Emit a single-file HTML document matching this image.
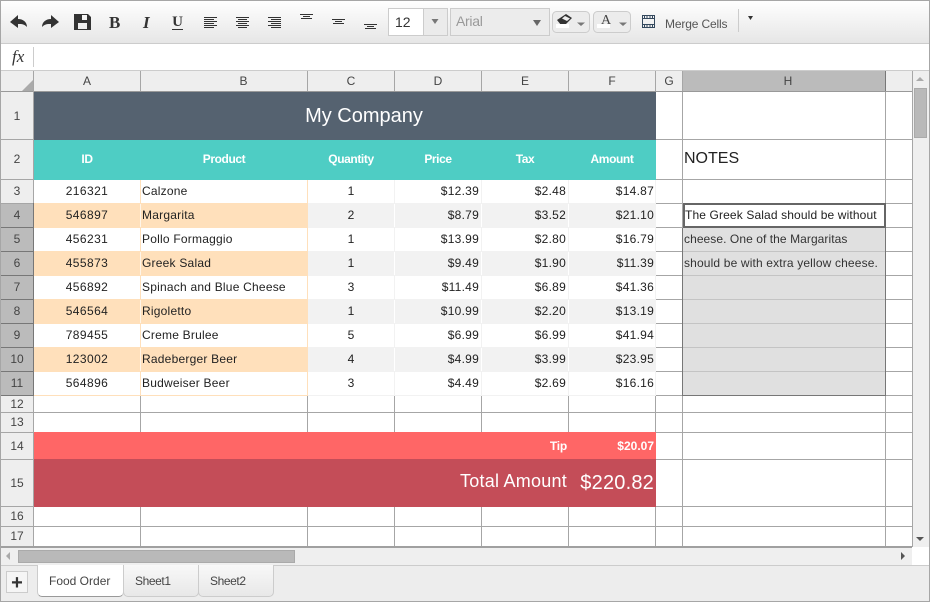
<!DOCTYPE html>
<html><head><meta charset="utf-8"><style>
html,body{margin:0;padding:0;background:#fff}
#p{position:relative;width:930px;height:602px;overflow:hidden;background:#fff;font-family:"Liberation Sans",Arial,sans-serif;font-size:12px;color:#222}
#p div{position:absolute;white-space:nowrap}
.h{background:#a6a6a6;height:1px}
.v{background:#a6a6a6;width:1px}
.c{text-align:center}
.r{text-align:right}
.rh{left:1px;width:32px;text-align:center;color:#444;background:#eee;font-size:12px}
.ch{top:71px;height:20px;line-height:20px;text-align:center;color:#444;font-size:12px}
.a{left:34px;width:106px;text-align:center;height:24px;line-height:22px;letter-spacing:.42px}
.b{left:142px;height:24px;line-height:22px;letter-spacing:.22px}
.q{left:308px;width:86px;text-align:center;height:24px;line-height:22px}
.d{left:395px;width:84px;text-align:right;height:24px;line-height:22px;letter-spacing:.25px}
.e{left:482px;width:84px;text-align:right;height:24px;line-height:22px;letter-spacing:.25px}
.f{left:569px;width:85px;text-align:right;height:24px;line-height:22px;letter-spacing:.25px}
.th{top:140px;height:39px;line-height:39px;text-align:center;color:#fff;font-weight:bold;letter-spacing:-.4px}
</style></head><body><div id="p">

<!-- toolbar -->
<div style="left:0;top:0;width:930px;height:43px;background:linear-gradient(#fff,#e6e6e6)"></div>
<div style="left:0;top:43px;width:930px;height:1px;background:#ccc"></div>
<div style="left:0;top:70px;width:930px;height:1px;background:#ccc"></div>
<div style="left:33px;top:47px;width:1px;height:20px;background:#ccc"></div>
<div style="left:12px;top:47px;font:italic 17px 'Liberation Serif',serif;color:#333">fx</div>

<svg style="position:absolute;left:0;top:0" width="930" height="44" viewBox="0 0 930 44">
<g fill="#333">
<path d="M10 22 L18 15 V19 C23 19 27 22 27 27 C24 24 22 24 18 24 V28 Z"/>
<path d="M59 22 L51 15 V19 C46 19 42 22 42 27 C45 24 47 24 51 24 V28 Z"/>
<path fill-rule="evenodd" d="M74 14 H88 L91 17 V30 H74 Z M82 15 V20 H87 V15 Z M78 23 V29 H87 V23 Z"/>
</g>
<g fill="#333">
<rect x="204" y="17" width="13" height="1"/><rect x="204" y="19" width="10" height="1"/><rect x="204" y="21" width="13" height="1"/><rect x="204" y="23" width="10" height="1"/><rect x="204" y="25" width="13" height="1"/><rect x="204" y="27" width="10" height="1"/>
<rect x="236" y="17" width="13" height="1"/><rect x="238" y="19" width="9" height="1"/><rect x="236" y="21" width="13" height="1"/><rect x="238" y="23" width="9" height="1"/><rect x="236" y="25" width="13" height="1"/><rect x="238" y="27" width="9" height="1"/>
<rect x="268" y="17" width="13" height="1"/><rect x="271" y="19" width="10" height="1"/><rect x="268" y="21" width="13" height="1"/><rect x="271" y="23" width="10" height="1"/><rect x="268" y="25" width="13" height="1"/><rect x="271" y="27" width="10" height="1"/>
<rect x="300" y="14" width="13" height="1"/><rect x="303" y="16" width="7" height="1"/><rect x="301" y="18" width="11" height="1"/>
<rect x="332" y="19" width="13" height="1"/><rect x="335" y="21" width="7" height="1"/><rect x="333" y="23" width="11" height="1"/>
<rect x="364" y="24" width="13" height="1"/><rect x="367" y="26" width="7" height="1"/><rect x="365" y="28" width="11" height="1"/>
</g>
<!-- size box -->
<rect x="388.500" y="8.500" width="59" height="27" fill="#ebebeb" stroke="#ccc"/>
<rect x="389" y="9" width="34" height="26" fill="#fff"/>
<rect x="423" y="9" width="1" height="26" fill="#ccc"/>
<path d="M431.500 19 H438.500 L435 24 Z" fill="#777"/>
<!-- font box -->
<rect x="450.500" y="8.500" width="99" height="27" fill="#ececec" stroke="#ccc"/>
<path d="M533 20 H541 L537 26 Z" fill="#666"/>
<!-- colour buttons -->
<rect x="552.500" y="11.500" width="37" height="21" rx="4" fill="#ececec" stroke="#ccc"/>
<path d="M557 20 L566 14 L572 18 L565 25 H561 Z" fill="#333"/>
<path d="M565 16 L570 18.500 L567 21 L562 18.500 Z" fill="#eee"/>
<rect x="556" y="24" width="13" height="4" fill="#fff"/>
<path d="M577 22.500 H585 L581 26 Z" fill="#777"/>
<rect x="593.500" y="11.500" width="37" height="21" rx="4" fill="#ececec" stroke="#ccc"/>
<rect x="597" y="24" width="13" height="4" fill="#fff"/>
<path d="M619 22.500 H627 L623 26 Z" fill="#777"/>
<!-- merge icon -->
<g fill="none" stroke="#34495e"><rect x="642.500" y="15.500" width="12" height="12"/><path d="M642 18.500 H655 M642 24.500 H655"/></g>
<path d="M644.500 16V18M647 16V18M650 16V18M652.500 16V18M644.500 25V27M647 25V27M650 25V27M652.500 25V27" stroke="#34495e" fill="none"/>
<rect x="738" y="9" width="1" height="23" fill="#ccc"/>
<path d="M748 16 H753 L750.500 20 Z" fill="#333"/>
</svg>
<div style="left:109px;top:13px;font:bold 17px 'Liberation Serif',serif;color:#333">B</div>
<div style="left:143px;top:13px;font:italic bold 17px 'Liberation Serif',serif;color:#333">I</div>
<div style="left:172px;top:15px;font:bold 15px 'Liberation Serif',serif;color:#333;border-bottom:1px solid #333;line-height:14px;width:11px;text-align:center">U</div>
<div style="left:395px;top:14px;font-size:14px;color:#333">12</div>
<div style="left:456px;top:13px;font-size:14px;color:#999;letter-spacing:-.3px">Arial</div>
<div style="left:601px;top:13px;font:14px 'Liberation Serif',serif;color:#444">A</div>
<div style="left:665px;top:17px;font-size:12px;color:#555;letter-spacing:-.15px">Merge Cells</div>

<!-- column headers -->
<div style="left:1px;top:71px;width:911px;height:20px;background:#eee"></div>
<div style="left:683px;top:71px;width:202px;height:20px;background:#bbb"></div>
<div style="left:22px;top:80px;width:0;height:0;border-style:solid;border-width:0 0 11px 11px;border-color:transparent transparent #aaa transparent"></div>
<div class="ch" style="left:34px;width:106px">A</div>
<div class="ch" style="left:180px;width:127px">B</div>
<div class="ch" style="left:308px;width:86px">C</div>
<div class="ch" style="left:395px;width:86px">D</div>
<div class="ch" style="left:482px;width:86px">E</div>
<div class="ch" style="left:569px;width:86px">F</div>
<div class="ch" style="left:656px;width:26px">G</div>
<div class="ch" style="left:691px;width:194px">H</div>
<div class="h" style="left:1px;top:91px;width:911px;background:#999"></div>
<div class="v" style="left:33px;top:71px;height:476px"></div>
<div class="v" style="left:140px;top:71px;height:20px"></div>
<div class="v" style="left:307px;top:71px;height:20px"></div>
<div class="v" style="left:394px;top:71px;height:20px"></div>
<div class="v" style="left:481px;top:71px;height:20px"></div>
<div class="v" style="left:568px;top:71px;height:20px"></div>
<div class="v" style="left:655px;top:71px;height:20px"></div>
<div class="v" style="left:682px;top:71px;height:20px"></div>
<div class="v" style="left:885px;top:71px;height:20px;background:#777"></div>

<!-- row headers -->
<div class="rh" style="top:92px;height:47px;line-height:48px">1</div>
<div class="rh" style="top:140px;height:39px;line-height:39px">2</div>
<div class="rh" style="top:180px;height:23px;line-height:22px">3</div>
<div class="rh" style="top:204px;height:23px;line-height:22px;background:#bbb">4</div>
<div class="rh" style="top:228px;height:23px;line-height:22px;background:#bbb">5</div>
<div class="rh" style="top:252px;height:23px;line-height:22px;background:#bbb">6</div>
<div class="rh" style="top:276px;height:23px;line-height:22px;background:#bbb">7</div>
<div class="rh" style="top:300px;height:23px;line-height:22px;background:#bbb">8</div>
<div class="rh" style="top:324px;height:23px;line-height:22px;background:#bbb">9</div>
<div class="rh" style="top:348px;height:23px;line-height:22px;background:#bbb">10</div>
<div class="rh" style="top:372px;height:23px;line-height:22px;background:#bbb">11</div>
<div class="rh" style="top:396px;height:16px;line-height:16px">12</div>
<div class="rh" style="top:413px;height:19px;line-height:18px">13</div>
<div class="rh" style="top:433px;height:26px;line-height:26px">14</div>
<div class="rh" style="top:460px;height:46px;line-height:47px">15</div>
<div class="rh" style="top:507px;height:19px;line-height:19px">16</div>
<div class="rh" style="top:527px;height:19px;line-height:19px">17</div>
<div class="v" style="left:33px;top:203px;height:193px;background:#777"></div>
<div class="h" style="left:1px;top:139px;width:32px"></div>
<div class="h" style="left:1px;top:179px;width:32px"></div>
<div class="h" style="left:1px;top:203px;width:32px"></div>
<div class="h" style="left:1px;top:227px;width:32px;background:#777"></div>
<div class="h" style="left:1px;top:251px;width:32px;background:#777"></div>
<div class="h" style="left:1px;top:275px;width:32px;background:#777"></div>
<div class="h" style="left:1px;top:299px;width:32px;background:#777"></div>
<div class="h" style="left:1px;top:323px;width:32px;background:#777"></div>
<div class="h" style="left:1px;top:347px;width:32px;background:#777"></div>
<div class="h" style="left:1px;top:371px;width:32px;background:#777"></div>
<div class="h" style="left:1px;top:395px;width:32px;background:#777"></div>
<div class="h" style="left:1px;top:412px;width:32px"></div>
<div class="h" style="left:1px;top:432px;width:32px"></div>
<div class="h" style="left:1px;top:459px;width:32px"></div>
<div class="h" style="left:1px;top:506px;width:32px"></div>
<div class="h" style="left:1px;top:526px;width:32px"></div>

<!-- row grid on the right -->
<div class="v" style="left:655px;top:92px;height:455px"></div>
<div class="v" style="left:682px;top:92px;height:455px"></div>
<div class="v" style="left:885px;top:92px;height:455px"></div>
<div class="h" style="left:656px;top:139px;width:256px"></div>
<div class="h" style="left:656px;top:179px;width:256px"></div>
<div class="h" style="left:656px;top:203px;width:256px"></div>
<div class="h" style="left:656px;top:227px;width:256px"></div>
<div class="h" style="left:656px;top:251px;width:256px"></div>
<div class="h" style="left:656px;top:275px;width:256px"></div>
<div class="h" style="left:656px;top:299px;width:256px"></div>
<div class="h" style="left:656px;top:323px;width:256px"></div>
<div class="h" style="left:656px;top:347px;width:256px"></div>
<div class="h" style="left:656px;top:371px;width:256px"></div>
<div class="h" style="left:656px;top:395px;width:256px"></div>
<div class="h" style="left:656px;top:412px;width:256px"></div>
<div class="h" style="left:656px;top:432px;width:256px"></div>
<div class="h" style="left:656px;top:459px;width:256px"></div>
<div class="h" style="left:656px;top:506px;width:256px"></div>
<div class="h" style="left:656px;top:526px;width:256px"></div>

<!-- bands -->
<div style="left:34px;top:92px;width:622px;height:48px;background:#556270"></div>
<div style="left:34px;top:140px;width:622px;height:40px;background:#4ecdc4"></div>
<div style="left:34px;top:203px;width:274px;height:25px;background:#ffe0bb"></div>
<div style="left:34px;top:251px;width:274px;height:25px;background:#ffe0bb"></div>
<div style="left:34px;top:299px;width:274px;height:25px;background:#ffe0bb"></div>
<div style="left:34px;top:347px;width:274px;height:25px;background:#ffe0bb"></div>
<div style="left:308px;top:203px;width:348px;height:25px;background:#f2f2f2"></div>
<div style="left:308px;top:251px;width:348px;height:25px;background:#f2f2f2"></div>
<div style="left:308px;top:299px;width:348px;height:25px;background:#f2f2f2"></div>
<div style="left:308px;top:347px;width:348px;height:25px;background:#f2f2f2"></div>
<div class="h" style="left:34px;top:395px;width:274px;background:#ffe0bb"></div>
<div class="h" style="left:308px;top:395px;width:348px;background:#f2f2f2"></div>
<!-- verticals in body rows -->
<div class="v" style="left:140px;top:180px;height:216px;background:#ffe0bb"></div>
<div class="v" style="left:307px;top:180px;height:216px;background:#ffe0bb"></div>
<div class="v" style="left:394px;top:180px;height:216px;background:#f2f2f2"></div>
<div class="v" style="left:481px;top:180px;height:216px;background:#f2f2f2"></div>
<div class="v" style="left:568px;top:180px;height:216px;background:#f2f2f2"></div>
<div class="v" style="left:655px;top:180px;height:216px;background:#f2f2f2"></div>
<div class="v" style="left:140px;top:204px;height:23px;background:#fff5e8"></div>
<div class="v" style="left:140px;top:252px;height:23px;background:#fff5e8"></div>
<div class="v" style="left:140px;top:300px;height:23px;background:#fff5e8"></div>
<div class="v" style="left:140px;top:348px;height:23px;background:#fff5e8"></div>
<div class="v" style="left:394px;top:204px;height:23px;background:#fff"></div>
<div class="v" style="left:481px;top:204px;height:23px;background:#fff"></div>
<div class="v" style="left:568px;top:204px;height:23px;background:#fff"></div>
<div class="v" style="left:394px;top:252px;height:23px;background:#fff"></div>
<div class="v" style="left:481px;top:252px;height:23px;background:#fff"></div>
<div class="v" style="left:568px;top:252px;height:23px;background:#fff"></div>
<div class="v" style="left:394px;top:300px;height:23px;background:#fff"></div>
<div class="v" style="left:481px;top:300px;height:23px;background:#fff"></div>
<div class="v" style="left:568px;top:300px;height:23px;background:#fff"></div>
<div class="v" style="left:394px;top:348px;height:23px;background:#fff"></div>
<div class="v" style="left:481px;top:348px;height:23px;background:#fff"></div>
<div class="v" style="left:568px;top:348px;height:23px;background:#fff"></div>

<!-- lower grid -->
<div class="h" style="left:34px;top:412px;width:622px"></div>
<div class="h" style="left:34px;top:526px;width:622px"></div>
<div class="v" style="left:140px;top:396px;height:37px"></div>
<div class="v" style="left:307px;top:396px;height:37px"></div>
<div class="v" style="left:394px;top:396px;height:37px"></div>
<div class="v" style="left:481px;top:396px;height:37px"></div>
<div class="v" style="left:568px;top:396px;height:37px"></div>
<div class="v" style="left:140px;top:507px;height:40px"></div>
<div class="v" style="left:307px;top:507px;height:40px"></div>
<div class="v" style="left:394px;top:507px;height:40px"></div>
<div class="v" style="left:481px;top:507px;height:40px"></div>
<div class="v" style="left:568px;top:507px;height:40px"></div>
<div style="left:34px;top:432px;width:622px;height:27px;background:#ff6666"></div>
<div style="left:34px;top:459px;width:622px;height:48px;background:#c44d58"></div>
<div style="left:1px;top:546px;width:911px;height:2px;background:#a0a0a0"></div>

<!-- selection -->
<div style="left:683px;top:204px;width:202px;height:191px;background:#e0e0e0"></div>
<div class="h" style="left:683px;top:251px;width:202px;background:#c4c4c4"></div>
<div class="h" style="left:683px;top:275px;width:202px;background:#c4c4c4"></div>
<div class="h" style="left:683px;top:299px;width:202px;background:#c4c4c4"></div>
<div class="h" style="left:683px;top:323px;width:202px;background:#c4c4c4"></div>
<div class="h" style="left:683px;top:347px;width:202px;background:#c4c4c4"></div>
<div class="h" style="left:683px;top:371px;width:202px;background:#c4c4c4"></div>
<div class="h" style="left:682px;top:395px;width:204px;background:#777"></div>
<div class="v" style="left:682px;top:228px;height:168px;background:#777"></div>
<div class="v" style="left:885px;top:228px;height:168px;background:#777"></div>
<div class="h" style="left:683px;top:227px;width:202px;background:#a6a6a6"></div>
<div style="left:683px;top:203px;width:199px;height:21px;background:#fff;border:2px solid #666;box-sizing:content-box"></div>

<!-- text -->
<div class="c" style="left:53px;top:92px;width:622px;height:47px;line-height:48px;font-size:20px;color:#fff">My Company</div>
<div class="th" style="left:34px;width:106px">ID</div>
<div class="th" style="left:141px;width:166px">Product</div>
<div class="th" style="left:308px;width:86px">Quantity</div>
<div class="th" style="left:395px;width:86px">Price</div>
<div class="th" style="left:482px;width:86px">Tax</div>
<div class="th" style="left:569px;width:86px">Amount</div>
<div style="left:684px;top:140px;height:37px;line-height:38px;font-size:16px;color:#222">NOTES</div>

<div class="a" style="top:180px">216321</div><div class="b" style="top:180px">Calzone</div><div class="q" style="top:180px">1</div><div class="d" style="top:180px">$12.39</div><div class="e" style="top:180px">$2.48</div><div class="f" style="top:180px">$14.87</div>
<div class="a" style="top:204px">546897</div><div class="b" style="top:204px">Margarita</div><div class="q" style="top:204px">2</div><div class="d" style="top:204px">$8.79</div><div class="e" style="top:204px">$3.52</div><div class="f" style="top:204px">$21.10</div>
<div class="a" style="top:228px">456231</div><div class="b" style="top:228px">Pollo Formaggio</div><div class="q" style="top:228px">1</div><div class="d" style="top:228px">$13.99</div><div class="e" style="top:228px">$2.80</div><div class="f" style="top:228px">$16.79</div>
<div class="a" style="top:252px">455873</div><div class="b" style="top:252px">Greek Salad</div><div class="q" style="top:252px">1</div><div class="d" style="top:252px">$9.49</div><div class="e" style="top:252px">$1.90</div><div class="f" style="top:252px">$11.39</div>
<div class="a" style="top:276px">456892</div><div class="b" style="top:276px">Spinach and Blue Cheese</div><div class="q" style="top:276px">3</div><div class="d" style="top:276px">$11.49</div><div class="e" style="top:276px">$6.89</div><div class="f" style="top:276px">$41.36</div>
<div class="a" style="top:300px">546564</div><div class="b" style="top:300px">Rigoletto</div><div class="q" style="top:300px">1</div><div class="d" style="top:300px">$10.99</div><div class="e" style="top:300px">$2.20</div><div class="f" style="top:300px">$13.19</div>
<div class="a" style="top:324px">789455</div><div class="b" style="top:324px">Creme Brulee</div><div class="q" style="top:324px">5</div><div class="d" style="top:324px">$6.99</div><div class="e" style="top:324px">$6.99</div><div class="f" style="top:324px">$41.94</div>
<div class="a" style="top:348px">123002</div><div class="b" style="top:348px">Radeberger Beer</div><div class="q" style="top:348px">4</div><div class="d" style="top:348px">$4.99</div><div class="e" style="top:348px">$3.99</div><div class="f" style="top:348px">$23.95</div>
<div class="a" style="top:372px">564896</div><div class="b" style="top:372px">Budweiser Beer</div><div class="q" style="top:372px">3</div><div class="d" style="top:372px">$4.49</div><div class="e" style="top:372px">$2.69</div><div class="f" style="top:372px">$16.16</div>

<div style="left:685px;top:204px;line-height:22px;letter-spacing:.13px;color:#222">The Greek Salad should be without</div>
<div style="left:684px;top:228px;line-height:22px;letter-spacing:.07px;color:#333">cheese. One of the Margaritas</div>
<div style="left:684px;top:252px;line-height:22px;letter-spacing:.15px;color:#333">should be with extra yellow cheese.</div>

<div class="r" style="left:482px;top:433px;width:85px;height:26px;line-height:26px;font-weight:bold;color:#fff;letter-spacing:-.2px">Tip</div>
<div class="r" style="left:569px;top:433px;width:85px;height:26px;line-height:26px;font-weight:bold;color:#fff">$20.07</div>
<div class="r" style="left:300px;top:459px;width:267px;height:44px;line-height:44px;font-size:18px;color:#fff;letter-spacing:.25px">Total Amount</div>
<div class="r" style="left:569px;top:460px;width:85px;height:46px;line-height:47px;font-size:20px;color:#fff;letter-spacing:.2px">$220.82</div>

<!-- v scrollbar -->
<div style="left:912px;top:71px;width:17px;height:476px;background:#efefef;border-left:1px solid #a6a6a6;box-sizing:border-box"></div>
<div style="left:916px;top:77px;width:0;height:0;border-style:solid;border-width:0 4px 4px 4px;border-color:transparent transparent #aaa transparent"></div>
<div style="left:914px;top:88px;width:13px;height:50px;background:#b9b9b9;border:1px solid #aaa;box-sizing:border-box"></div>
<div style="left:916px;top:537px;width:0;height:0;border-style:solid;border-width:4px 4px 0 4px;border-color:#555 transparent transparent transparent"></div>
<!-- h scrollbar -->
<div style="left:1px;top:548px;width:911px;height:17px;background:#efefef"></div>
<div style="left:6px;top:552px;width:0;height:0;border-style:solid;border-width:4px 4px 4px 0;border-color:transparent #aaa transparent transparent"></div>
<div style="left:18px;top:550px;width:277px;height:13px;background:#b9b9b9;border:1px solid #aaa;box-sizing:border-box"></div>
<div style="left:901px;top:552px;width:0;height:0;border-style:solid;border-width:4px 0 4px 4px;border-color:transparent transparent transparent #555"></div>

<!-- tabs -->
<div style="left:0;top:565px;width:930px;height:36px;background:#ededed;border-top:1px solid #ccc;box-sizing:border-box"></div>
<div style="left:6px;top:571px;width:22px;height:22px;background:#f5f5f5;border:1px solid #ccc;box-sizing:border-box;text-align:center;font:bold 20px/23px 'Liberation Sans',sans-serif;color:#333">+</div>
<div style="left:198px;top:565px;width:76px;height:32px;background:linear-gradient(#f8f8f8,#e8e8e8);border:1px solid #ccc;border-top:0;border-radius:0 0 5px 5px;box-sizing:border-box;padding-left:11px;line-height:33px;color:#444;letter-spacing:-.4px">Sheet2</div>
<div style="left:123px;top:565px;width:76px;height:32px;background:linear-gradient(#f8f8f8,#e8e8e8);border:1px solid #ccc;border-top:0;border-radius:0 0 5px 5px;box-sizing:border-box;padding-left:11px;line-height:33px;color:#444;letter-spacing:-.4px">Sheet1</div>
<div style="left:37px;top:565px;width:87px;height:32px;background:#fff;border:1px solid #ccc;border-top:0;border-bottom:1px solid #999;border-radius:0 0 5px 5px;box-sizing:border-box;padding-left:11px;line-height:33px;color:#444">Food Order</div>

<!-- outer border -->
<div style="left:0;top:0;width:930px;height:602px;border:1px solid #a6a6a6;box-sizing:border-box"></div>
</div></body></html>
